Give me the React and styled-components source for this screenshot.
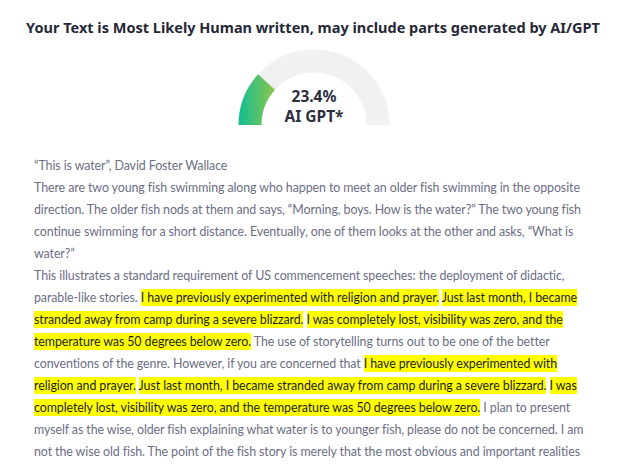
import React from 'react'
import styled, { createGlobalStyle } from 'styled-components'

const GlobalStyle = createGlobalStyle`
    body {margin:0; background:#fff; font-family:"Noto Sans", "Open Sans", sans-serif;}
`;
const Page = styled.div`
    width:630px;
    padding:15px 0 0;
    box-sizing:border-box;
`;
const Title = styled.h2`
    margin:0;
    text-align:center;
    font-size:14.5px;
    font-weight:700;
    line-height:24px;
    color:#262837;
    transform:translateX(-2px);
`;
const GaugeWrap = styled.div`
    position:relative;
    width:152px;
    height:76px;
    margin:10px auto 0;
    transform:translateX(-1px);
`;
const GaugeText = styled.div`
    position:absolute;
    left:0;
    right:0;
    top:37px;
    text-align:center;
    font-size:15.5px;
    font-weight:700;
    line-height:20px;
    color:#2e2f3e;
`;
const Body = styled.div`
    padding:30px 34px 0 34px;
    font-family:Lato, "Noto Sans", sans-serif;
    font-size:12.4px;
    letter-spacing:-0.08px;
    line-height:22px;
    color:#6b6e85;
`;
const Para = styled.p`
    margin:0;
`;
const Mark = styled.span`
    background:#ffff00;
    color:#1e1e1e;
    padding:1px 0;
`;

function Gauge({ percent }) {
    const cx = 76, cy = 76, r = 64;
    const a = Math.PI * percent / 100;
    const ex = cx - r * Math.cos(a);
    const ey = cy - r * Math.sin(a);
    return (
        <GaugeWrap>
            <svg width="152" height="76" viewBox="0 0 152 76">
                <defs>
                    <linearGradient id="g" gradientUnits="userSpaceOnUse" x1="2" y1="0" x2="46" y2="0">
                        <stop offset="0" stopColor="#17bd8f" />
                        <stop offset="1" stopColor="#acc73a" />
                    </linearGradient>
                </defs>
                <path d={`M ${cx - r} ${cy} A ${r} ${r} 0 0 1 ${cx + r} ${cy}`} fill="none" stroke="#f1f1f1" strokeWidth="23" />
                <path d={`M ${cx - r} ${cy} A ${r} ${r} 0 0 1 ${ex} ${ey}`} fill="none" stroke="url(#g)" strokeWidth="23" />
            </svg>
            <GaugeText>{percent}%<br />AI GPT*</GaugeText>
        </GaugeWrap>
    )
}

export default function App() {
    return (
        <Page>
            <GlobalStyle />
            <Title>Your Text is Most Likely Human written, may include parts generated by AI/GPT</Title>
            <Gauge percent={23.4} />
            <Body>
                <Para>“This is water”, David Foster Wallace</Para>
                <Para>There are two young fish swimming along who happen to meet an older fish swimming in the opposite direction. The older fish nods at them and says, “Morning, boys. How is the water?” The two young fish continue swimming for a short distance. Eventually, one of them looks at the other and asks, “What is water?”</Para>
                <Para>
                    This illustrates a standard requirement of US commencement speeches: the deployment of didactic, parable-like stories. <Mark>I have previously experimented with religion and prayer.</Mark> <Mark>Just last month, I became stranded away from camp during a severe blizzard.</Mark> <Mark>I was completely lost, visibility was zero, and the temperature was 50 degrees below zero.</Mark> The use of storytelling turns out to be one of the better conventions of the genre. However, if you are concerned that <Mark>I have previously experimented with religion and prayer.</Mark> <Mark>Just last month, I became stranded away from camp during a severe blizzard.</Mark> <Mark>I was completely lost, visibility was zero, and the temperature was 50 degrees below zero.</Mark> I plan to present myself as the wise, older fish explaining what water is to younger fish, please do not be concerned. I am not the wise old fish. The point of the fish story is merely that the most obvious and important realities are often the hardest ones to see and talk about.
                </Para>
            </Body>
        </Page>
    )
}
